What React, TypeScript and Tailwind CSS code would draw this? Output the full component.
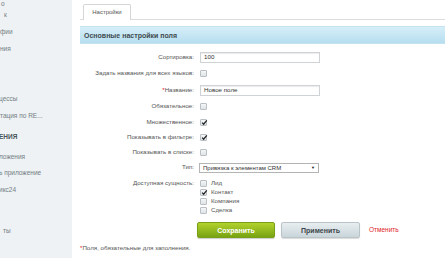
import React from "react";

const font = { fontFamily: '"Liberation Sans", Arial, sans-serif' };

function Box({ checked = false }: { checked?: boolean }) {
  return (
    <span className="relative inline-block w-[7px] h-[7px] rounded-[1px] border border-[#b9bfc3] bg-gradient-to-b from-[#f4f6f7] to-[#dfe4e6]">
      {checked && (
        <svg viewBox="0 0 8 8" className="absolute left-[0px] top-[-1px] w-[7px] h-[7px]">
          <path d="M1.3 4.2 L3 6 L6.6 1.5" fill="none" stroke="#222" strokeWidth="1.4" />
        </svg>
      )}
    </span>
  );
}

const sideItems: { t: string; y: number; x?: number; bold?: boolean }[] = [
  { t: "о", y: 4, x: 1 },
  { t: "к", y: 15, x: 4 },
  { t: "фии", y: 32 },
  { t: "ния", y: 49 },
  { t: "цессы", y: 99, x: -1 },
  { t: "тация по RE...", y: 116 },
  { t: "ЕНИЯ", y: 137, bold: true, x: -1 },
  { t: "ложения", y: 157, x: -1 },
  { t: "ь приложение", y: 173, x: -1 },
  { t: "икс24", y: 190, x: -1 },
  { t: "ты", y: 231, x: 3 },
];

function Row({ label, h, children, req }: { label: string; h: number; children?: React.ReactNode; req?: boolean }) {
  return (
    <div className="flex items-center" style={{ height: h }}>
      <div className="w-[114px] text-right text-[#555] text-[6.2px] leading-none">
        {req && <span className="text-[#e02020]">*</span>}
        {label}
      </div>
      <div className="ml-[6px] flex items-center">{children}</div>
    </div>
  );
}

function Input({ value }: { value: string }) {
  return (
    <div className="w-[120px] h-[11px] border border-[#cfd3d5] bg-white shadow-[inset_0_1px_1px_rgba(0,0,0,0.08)] flex items-center px-[3px] text-[6.2px] text-[#333] leading-none">
      {value}
    </div>
  );
}

export default function App() {
  return (
    <div className="w-[445px] h-[267px] bg-white flex overflow-hidden" style={font}>
      <div className="relative w-[72px] h-[258px] bg-[#eef2f4] overflow-hidden shrink-0">
        {sideItems.map((s, i) => (
          <div
            key={i}
            className={"absolute whitespace-nowrap text-[6.5px] leading-none " + (s.bold ? "font-bold text-[#4a545a]" : "text-[#747e84]")}
            style={{ top: s.y - 3, left: s.x ?? 0 }}
          >
            {s.t}
          </div>
        ))}
      </div>
      <div className="flex-1 pl-[8px] flex flex-col">
        <div className="h-[20px] flex items-end border-b border-[#dcdcdc] pl-[3px]">
          <div className="w-[48px] h-[16px] border border-b-0 border-[#d6d6d6] rounded-t-[2px] bg-white flex items-center justify-center text-[6px] text-[#555] leading-none mb-[-1px] pb-[1px]">
            Настройки
          </div>
        </div>
        <div className="mt-[6px] h-[18px] bg-gradient-to-b from-[#d6eef8] to-[#b6deef] border-y border-[#c4e3f1] flex items-center pl-[4px] text-[7px] font-bold text-[#3f4a50] leading-none">
          Основные настройки поля
        </div>
        <div className="mt-[5px] flex flex-col">
          <Row label="Сортировка:" h={16}><Input value="100" /></Row>
          <Row label="Задать названия для всех языков:" h={17}><Box /></Row>
          <Row label="Название:" h={16} req><Input value="Новое поле" /></Row>
          <Row label="Обязательное:" h={16}><Box /></Row>
          <Row label="Множественное:" h={16}><Box checked /></Row>
          <Row label="Показывать в фильтре:" h={15}><Box checked /></Row>
          <Row label="Показывать в списке:" h={15}><Box /></Row>
          <Row label="Тип:" h={15}>
            <div className="ml-[-1px] w-[120px] h-[10px] border border-[#b4b4b4] bg-white flex items-center justify-between px-[3px] text-[6px] text-[#333] leading-none">
              <span>Привязка к элементам CRM</span>
              <span className="text-[4px] text-[#111]">▼</span>
            </div>
          </Row>
          <div className="mt-[4px] flex items-start">
            <div className="w-[114px] h-[9px] flex items-center justify-end text-[#555] text-[6.2px] leading-none">Доступная сущность:</div>
            <div className="ml-[6px] flex flex-col">
              {[
                ["Лид", false],
                ["Контакт", true],
                ["Компания", false],
                ["Сделка", false],
              ].map(([t, c], i) => (
                <div key={i} className="h-[9px] flex items-center gap-[4px] text-[6.2px] text-[#555] leading-none">
                  <Box checked={c as boolean} />
                  <span>{t as string}</span>
                </div>
              ))}
            </div>
          </div>
          <div className="mt-[7px] flex items-center pl-[117px]">
            <div className="w-[78px] h-[16px] rounded-[2px] bg-gradient-to-b from-[#b2d22c] to-[#78a412] border border-[#7a9f18] flex items-center justify-center text-white font-bold text-[7px] leading-none shadow-[0_1px_1px_rgba(0,0,0,0.2)]">
              Сохранить
            </div>
            <div className="ml-[6px] w-[79px] h-[16px] rounded-[2px] bg-gradient-to-b from-[#e8eef0] to-[#c9d5da] border border-[#b8c4c8] flex items-center justify-center text-[#3c464b] font-bold text-[7px] leading-none shadow-[0_1px_1px_rgba(0,0,0,0.15)]">
              Применить
            </div>
            <div className="ml-[9px] text-[6.5px] text-[#e0262c] leading-none">Отменить</div>
          </div>
          <div className="mt-[6px] h-[8px] flex items-center text-[6.2px] text-[#555] leading-none">
            <span className="text-[#e02020]">*</span>Поля, обязательные для заполнения.
          </div>
        </div>
      </div>
    </div>
  );
}
